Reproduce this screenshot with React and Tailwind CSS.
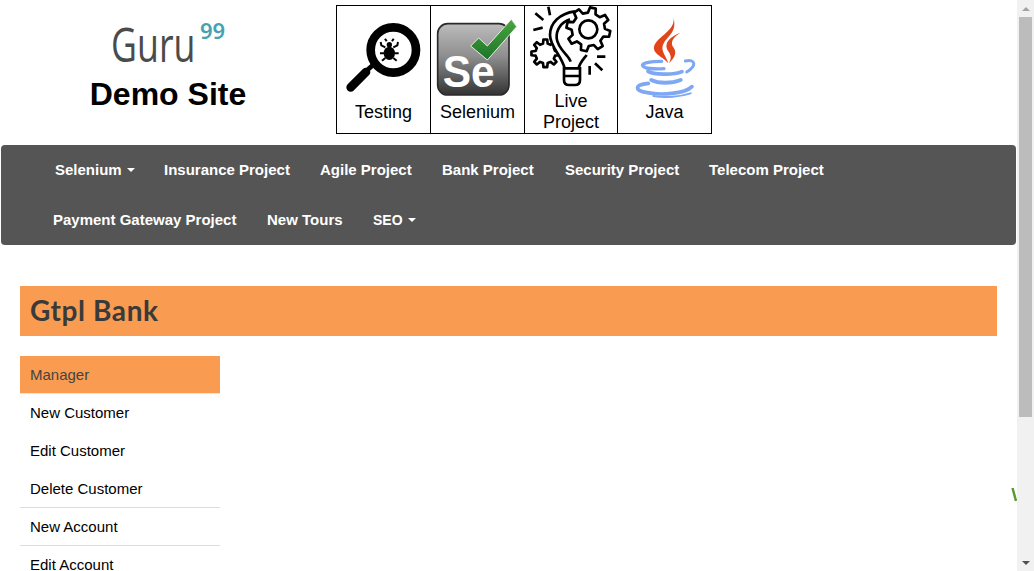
import React from "react";

function gear(cx, cy, rOuter, rInner, teeth) {
  const pts = [];
  const step = (Math.PI * 2) / teeth;
  for (let i = 0; i < teeth; i++) {
    const a = i * step;
    const offs = [[-0.3, rInner], [-0.17, rOuter], [0.17, rOuter], [0.3, rInner]];
    for (const [o, r] of offs) {
      const t = a + o * step;
      pts.push(`${(cx + r * Math.cos(t)).toFixed(1)},${(cy + r * Math.sin(t)).toFixed(1)}`);
    }
  }
  return pts.join(" ");
}

function TestingIcon() {
  return (
    <svg className="w-[93px] h-[96px] shrink-0" viewBox="21 18 279 288">
      <circle cx="190" cy="150" r="68" fill="none" stroke="#000" strokeWidth="26" />
      <path d="M128 196 L108 214" stroke="#000" strokeWidth="14" />
      <path d="M108 216 L62 262" stroke="#000" strokeWidth="26" strokeLinecap="round" />
      <ellipse cx="178" cy="160" rx="17" ry="20" fill="#000" />
      <circle cx="178" cy="134" r="8" fill="#000" />
      <path d="M170 124l-5-8M186 124l5-8M166 142l-12-6-2-10M190 142l12-6 2-10M162 160h-12M194 160h12M166 174l-10 8M190 174l10 8" stroke="#000" strokeWidth="6" fill="none" />
    </svg>
  );
}

function SeleniumIcon() {
  return (
    <svg className="w-[93px] h-[96px] shrink-0" viewBox="303 18 279 288">
      <defs>
        <linearGradient id="seg" x1="0" y1="0" x2="0" y2="1">
          <stop offset="0" stopColor="#bcbcbc" />
          <stop offset="0.45" stopColor="#8f8f8f" />
          <stop offset="1" stopColor="#333333" />
        </linearGradient>
        <linearGradient id="ckg" x1="0" y1="0" x2="0" y2="1">
          <stop offset="0" stopColor="#4aa53f" />
          <stop offset="1" stopColor="#1c7529" />
        </linearGradient>
      </defs>
      <rect x="323" y="71" width="214" height="214" rx="30" fill="url(#seg)" stroke="#2a2a2a" strokeWidth="5" />
      <text x="338" y="262" fontFamily="'Liberation Sans', sans-serif" fontWeight="700" fontSize="132" fill="#fff" textLength="156" lengthAdjust="spacingAndGlyphs">Se</text>
      <path d="M422 138 L446 114 L472 138 L544 58 L560 80 L472 180 Z" fill="url(#ckg)" stroke="#e8e8e8" strokeWidth="3" />
    </svg>
  );
}

function ProjectIcon() {
  return (
    <svg className="w-[93px] h-[85px] shrink-0" viewBox="15 18 279 255" fill="none" stroke="#000">
      <polygon points={gear(76, 160, 42, 30, 8)} strokeWidth="8" strokeLinejoin="round" fill="#fff" />
      <path d="M165 34 C118 40 90 70 90 105 C90 140 124 165 134 205 L176 205 C178 190 188 180 200 165 L200 60 Z" fill="#fff" stroke="none" />
      <path d="M165 34 C118 40 90 70 90 105 C90 140 124 165 134 205" strokeWidth="8" />
      <path d="M150 58 C122 68 108 90 110 115 C114 148 146 165 152 185" strokeWidth="8" />
      <polygon points={gear(205, 88, 66, 50, 8)} strokeWidth="8" strokeLinejoin="round" fill="#fff" transform="rotate(12 205 88)" />
      <circle cx="205" cy="88" r="27" strokeWidth="8" />
      <path d="M200 165 C188 180 178 190 176 205" strokeWidth="8" />
      <path d="M132 205 H180 V240 Q180 255 165 255 H147 Q132 255 132 240 Z M132 228 H180" strokeWidth="8" fill="#fff" />
      <path d="M85 20 L90 46 M46 40 L70 60 M40 90 L68 83 M231 170 H256 M225 190 L247 211 M209 198 V224" strokeWidth="8" />
    </svg>
  );
}

function JavaIcon() {
  return (
    <svg className="w-[93px] h-[96px] shrink-0" viewBox="294 18 279 288">
      <path d="M460 50 C470 92 410 108 402 140 C398 162 430 170 445 190 C438 165 418 150 432 128 C446 105 472 95 460 50 Z" fill="#e2451a" />
      <path d="M482 98 C450 110 428 130 446 155 C456 170 452 180 446 190 C468 172 470 155 460 142 C450 128 458 112 482 98 Z" fill="#e2451a" />
      <g fill="none" stroke="#7fa8f4" strokeLinecap="round">
        <path d="M425 184 C388 184 364 190 368 197 C372 205 402 208 432 206" strokeWidth="10" />
        <path d="M496 183 C528 176 530 198 500 216" strokeWidth="9" />
        <path d="M384 214 C400 224 460 226 486 215" strokeWidth="11" />
        <path d="M394 240 C415 251 455 251 482 240" strokeWidth="12" />
        <path d="M385 250 C342 254 342 272 382 278 C422 286 494 282 516 260" strokeWidth="11" />
        <path d="M400 288 C435 294 482 290 512 280" strokeWidth="6" />
      </g>
    </svg>
  );
}

function Caret() {
  return <span className="inline-block w-0 h-0 ml-[5px] align-middle border-x-[4px] border-x-transparent border-t-[4px] border-t-white" />;
}

function NavLink({ children, className = "" }) {
  return <a className={`h-[50px] flex items-center whitespace-nowrap text-white font-bold ${className}`}>{children}</a>;
}

const menu = [
  { t: "New Customer", b: false },
  { t: "Edit Customer", b: false },
  { t: "Delete Customer", b: true },
  { t: "New Account", b: true },
  { t: "Edit Account", b: false },
];

export default function App() {
  return (
    <div className="flex h-[571px] overflow-hidden bg-white font-['Liberation_Sans',Arial,sans-serif]">
      <div className="relative w-[1017px] shrink-0 overflow-hidden">
        <header className="flex h-[145px] pt-[5px]">
          <div className="w-[336px] shrink-0 flex flex-col items-center">
            <div className="h-[64px] flex items-start pt-[9px]">
              <span className="w-[88px] font-['Open_Sans',sans-serif] font-normal text-[47px] leading-[60px] text-[#4b4b4b] whitespace-nowrap origin-left scale-x-[0.76]">Guru</span>
              <span className="ml-px font-['Noto_Sans',sans-serif] font-semibold text-[22px] leading-[28px] text-[#45a2b3] mt-[2px]">99</span>
            </div>
            <div className="font-bold text-[32px] leading-[36px] text-black mt-[7px]">Demo Site</div>
          </div>
          <div className="flex h-[129px] border border-black text-[18px] leading-[21px] text-black text-center">
            <div className="w-[93px] flex flex-col items-center">
              <TestingIcon />
              <div>Testing</div>
            </div>
            <div className="w-[94px] flex flex-col items-center border-l border-black">
              <SeleniumIcon />
              <div>Selenium</div>
            </div>
            <div className="w-[93px] flex flex-col items-center border-l border-black">
              <ProjectIcon />
              <div>Live<br />Project</div>
            </div>
            <div className="w-[94px] flex flex-col items-center border-l border-black">
              <JavaIcon />
              <div>Java</div>
            </div>
          </div>
        </header>

        <nav className="ml-px w-[1015px] h-[100px] rounded bg-[#555555] text-[15px]">
          <div className="flex pl-[54px] h-[50px]">
            <NavLink className="w-[109px]">Selenium<Caret /></NavLink>
            <NavLink className="w-[156px]">Insurance Project</NavLink>
            <NavLink className="w-[122px]">Agile Project</NavLink>
            <NavLink className="w-[123px]">Bank Project</NavLink>
            <NavLink className="w-[144px]">Security Project</NavLink>
            <NavLink>Telecom Project</NavLink>
          </div>
          <div className="flex pl-[52px] h-[50px]">
            <NavLink className="w-[214px]">Payment Gateway Project</NavLink>
            <NavLink className="w-[106px]">New Tours</NavLink>
            <NavLink className="text-[14px]">SEO<Caret /></NavLink>
          </div>
        </nav>

        <main className="px-5 pt-[41px]">
          <h1 className="h-[50px] w-[977px] bg-[#f99b50] pl-[10px] pb-[2px] flex items-center font-['Lato',sans-serif] font-bold text-[28px] tracking-[0.6px] text-[#3a3a3a]">Gtpl Bank</h1>
          <ul className="w-[200px] mt-5 text-[15px]">
            <li className="h-[38px] bg-[#f99b50] border-b border-[#e7e7e7] pl-[10px] pt-px flex items-center text-[#444444]">Manager</li>
            {menu.map((m) => (
              <li key={m.t} className={`h-[38px] pl-[10px] pt-px flex items-center text-black ${m.b ? "border-b border-[#dddddd]" : ""}`}>{m.t}</li>
            ))}
          </ul>
        </main>

        <svg className="absolute left-[1011px] top-[488px] w-[6px] h-[14px]" viewBox="0 0 6 14">
          <path d="M1.5 0 L5 13" stroke="#5a9a2e" strokeWidth="2.5" />
        </svg>
      </div>

      <div className="w-[17px] h-[571px] bg-[#f1f1f1] flex flex-col items-center shrink-0">
        <div className="h-[17px] w-full flex items-center justify-center">
          <span className="w-0 h-0 border-x-[4px] border-x-transparent border-b-[4px] border-b-[#a3a3a3]" />
        </div>
        <div className="w-[13px] h-[400px] bg-[#bcbcbc]" />
        <div className="flex-1" />
        <div className="h-[17px] w-full flex items-center justify-center">
          <span className="w-0 h-0 border-x-[4px] border-x-transparent border-t-[4px] border-t-[#505050]" />
        </div>
      </div>
    </div>
  );
}
